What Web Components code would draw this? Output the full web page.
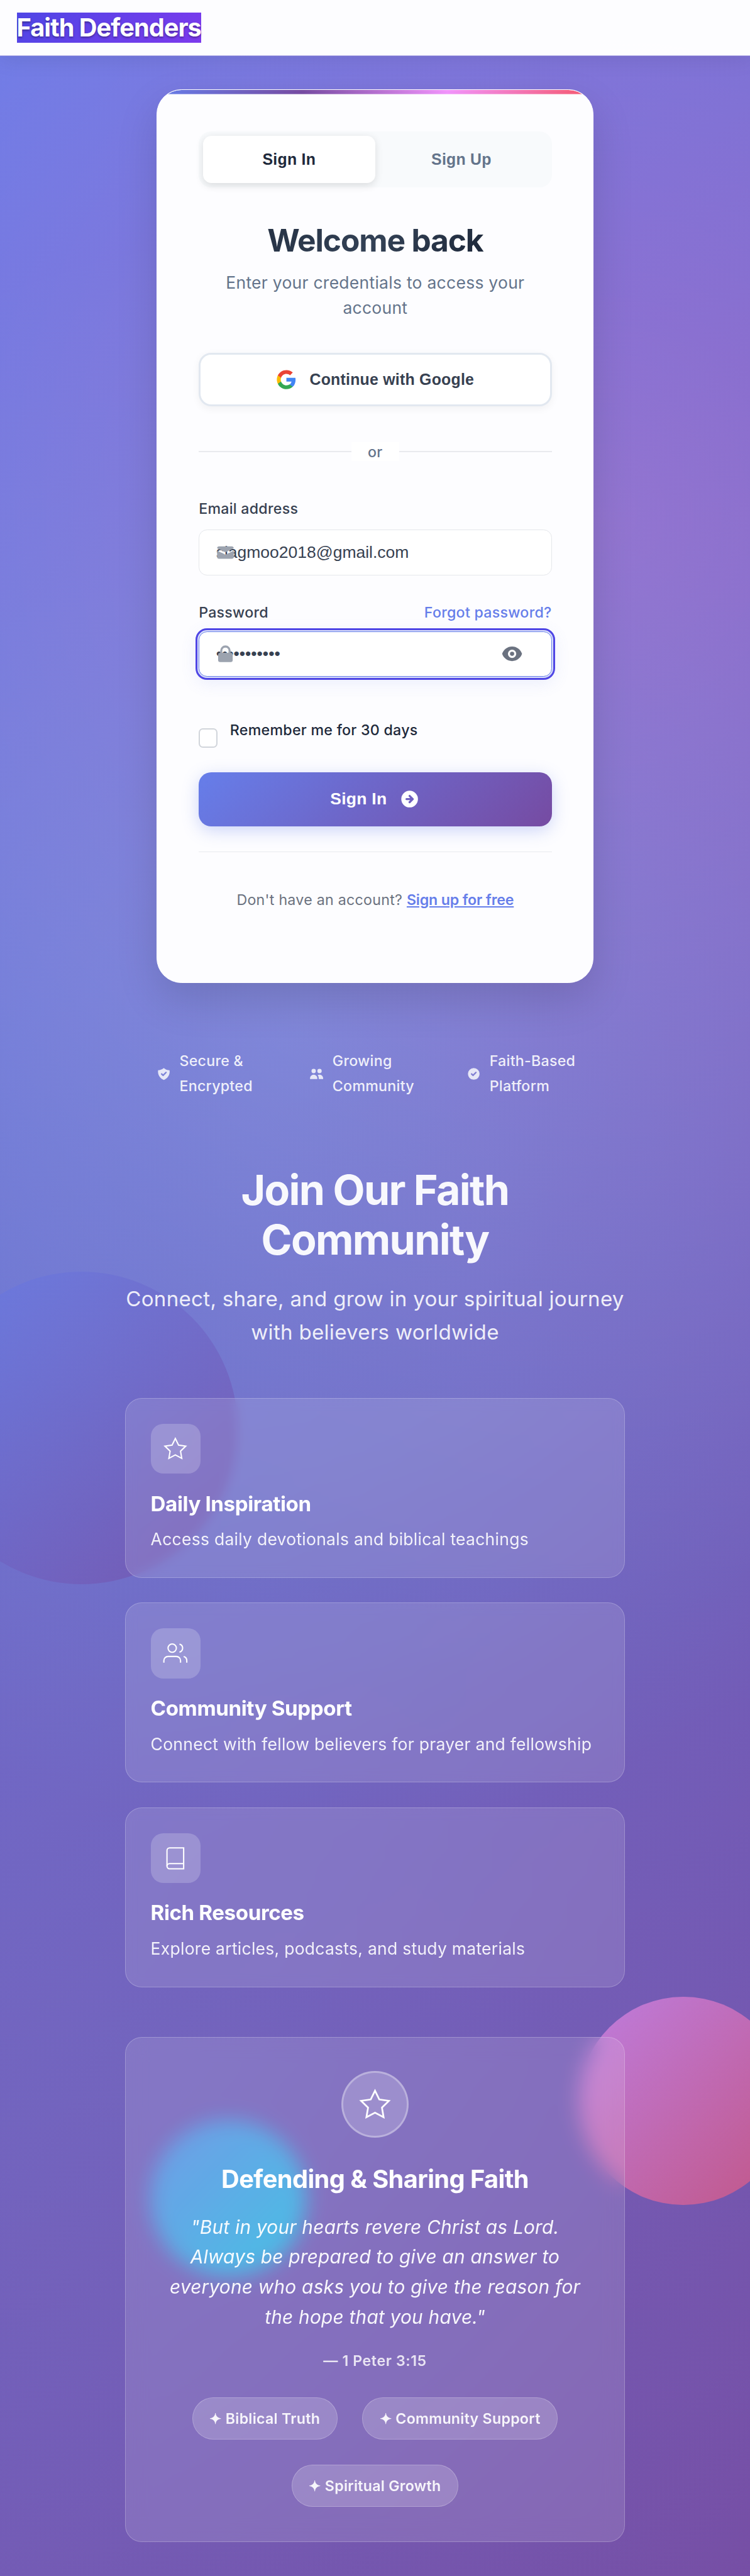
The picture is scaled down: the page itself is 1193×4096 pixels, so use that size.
<!DOCTYPE html>
<html lang="en">
<head>
<meta charset="utf-8">
<title>Faith Defenders</title>
<style>
html{margin:0;background:#764ba2}
body{margin:0;width:720px;height:2472px;zoom:1.65694;overflow:hidden;font-family:Inter,"Liberation Sans",sans-serif;letter-spacing:.16px;color:#1e293b}
</style>
</head>
<body>
<faith-app></faith-app>
<script>
const define=(name,css,html)=>customElements.define(name,class extends HTMLElement{
  constructor(){
    super();
    const t=document.createElement('template');
    t.innerHTML=`<style>*{box-sizing:border-box}${css}</style>${html}`;
    this.attachShadow({mode:'open'}).append(t.content.cloneNode(true));
  }
});

const ICONS={
  mail:['0 0 20 20','<path d="M2.003 5.884L10 9.882l7.997-3.998A2 2 0 0016 4H4a2 2 0 00-1.997 1.884z"/><path d="M18 8.118l-8 4-8-4V14a2 2 0 002 2h12a2 2 0 002-2V8.118z"/>'],
  lock:['0 0 20 20','<path fill-rule="evenodd" d="M5 9V7a5 5 0 0110 0v2a2 2 0 012 2v5a2 2 0 01-2 2H5a2 2 0 01-2-2v-5a2 2 0 012-2zm8-2v2H7V7a3 3 0 016 0z"/>'],
  eye:['0 0 20 20','<path d="M10 12a2 2 0 100-4 2 2 0 000 4z"/><path fill-rule="evenodd" d="M.458 10C1.732 5.943 5.522 3 10 3s8.268 2.943 9.542 7c-1.274 4.057-5.064 7-9.542 7S1.732 14.057.458 10zM14 10a4 4 0 11-8 0 4 4 0 018 0z"/>'],
  arrow:['0 0 20 20','<path fill-rule="evenodd" d="M10 18a8 8 0 100-16 8 8 0 000 16zm3.707-8.707l-3-3a1 1 0 00-1.414 1.414L10.586 9H7a1 1 0 100 2h3.586l-1.293 1.293a1 1 0 101.414 1.414l3-3a1 1 0 000-1.414z"/>'],
  shield:['0 0 20 20','<path fill-rule="evenodd" d="M2.166 4.999A11.954 11.954 0 0010 1.944 11.954 11.954 0 0017.834 5c.11.65.166 1.32.166 2.001 0 5.225-3.34 9.67-8 11.317C5.34 16.67 2 12.225 2 7c0-.682.057-1.35.166-2.001zm11.541 3.708a1 1 0 00-1.414-1.414L9 10.586 7.707 9.293a1 1 0 00-1.414 1.414l2 2a1 1 0 001.414 0l4-4z"/>'],
  people:['0 0 20 20','<path d="M9 6a3 3 0 11-6 0 3 3 0 016 0zM17 6a3 3 0 11-6 0 3 3 0 016 0zM12.93 17c.046-.327.07-.66.07-1a6.97 6.97 0 00-1.5-4.33A5 5 0 0119 16v1h-6.07zM6 11a5 5 0 015 5v1H1v-1a5 5 0 015-5z"/>'],
  check:['0 0 20 20','<path fill-rule="evenodd" d="M10 18a8 8 0 100-16 8 8 0 000 16zm3.707-9.293a1 1 0 00-1.414-1.414L9 10.586 7.707 9.293a1 1 0 00-1.414 1.414l2 2a1 1 0 001.414 0l4-4z"/>'],
  google:['0 0 24 24','<path fill="#4285F4" d="M22.56 12.25c0-.78-.07-1.53-.2-2.25H12v4.26h5.92c-.26 1.37-1.04 2.53-2.21 3.31v2.77h3.57c2.08-1.92 3.28-4.74 3.28-8.09z"/><path fill="#34A853" d="M12 23c2.97 0 5.46-.98 7.28-2.66l-3.57-2.77c-.98.66-2.23 1.06-3.71 1.06-2.86 0-5.29-1.93-6.16-4.53H2.18v2.84C3.99 20.53 7.7 23 12 23z"/><path fill="#FBBC05" d="M5.84 14.09c-.22-.66-.35-1.36-.35-2.09s.13-1.43.35-2.09V7.07H2.18C1.43 8.55 1 10.22 1 12s.43 3.45 1.18 4.93l2.85-2.22.81-.62z"/><path fill="#EA4335" d="M12 5.38c1.62 0 3.06.56 4.21 1.64l3.15-3.15C17.45 2.09 14.97 1 12 1 7.7 1 3.99 3.47 2.18 7.07l3.66 2.84c.87-2.6 3.3-4.53 6.16-4.53z"/>'],
  star:['0 0 24 24','<g fill="none" stroke="currentColor" stroke-width="1.25"><polygon points="12 2 15.09 8.26 22 9.27 17 14.14 18.18 21.02 12 17.77 5.82 21.02 7 14.14 2 9.27 8.91 8.26 12 2"/></g>'],
  users:['0 0 24 24','<g fill="none" stroke="currentColor" stroke-width="1.25"><path d="M17 21v-2a4 4 0 0 0-4-4H5a4 4 0 0 0-4 4v2"/><circle cx="9" cy="7" r="4"/><path d="M23 21v-2a4 4 0 0 0-3-3.87M16 3.13a4 4 0 0 1 0 7.75"/></g>'],
  book:['0 0 24 24','<g fill="none" stroke="currentColor" stroke-width="1.25"><path d="M4 19.5A2.5 2.5 0 0 1 6.5 17H20"/><path d="M6.5 2H20v20H6.5A2.5 2.5 0 0 1 4 19.5v-15A2.5 2.5 0 0 1 6.5 2z"/></g>']
};
customElements.define('ui-icon',class extends HTMLElement{
  constructor(){super();this.attachShadow({mode:'open'})}
  connectedCallback(){
    const [box,body]=ICONS[this.getAttribute('name')];
    this.shadowRoot.innerHTML=`<style>:host{display:block;flex:none;width:20px;height:20px}svg{display:block;width:100%;height:100%;overflow:visible}</style><svg viewBox="${box}" fill="currentColor">${body}</svg>`;
  }
});

define('site-header',`
:host{display:flex;align-items:flex-start;height:53.8px;padding:12px 16px;box-sizing:border-box;background:rgba(255,255,255,.99);border-bottom:1px solid #b3aee8;box-shadow:0 4px 20px rgba(0,0,0,.08);position:relative}
a{font-size:24px;line-height:28.8px;font-weight:700;letter-spacing:-.025em;color:#fff;background:linear-gradient(135deg,#4f46e5,#7c3aed);text-shadow:0 1px 2px rgba(0,0,0,.35)}`,
`<a><slot></slot></a>`);

define('auth-tabs',`
:host{display:flex;height:53.5px;padding:4px;border-radius:12px;background:#f8fafc}
div{flex:1;display:flex;align-items:center;justify-content:center;border-radius:8px;font:700 15px "Liberation Sans",Arial,sans-serif;letter-spacing:.15px;color:#64748b}
.on{background:#fff;color:#1e293b;box-shadow:0 2px 8px rgba(0,0,0,.12)}`,
`<div class="on">Sign In</div><div>Sign Up</div>`);

define('google-button',`
:host{display:flex;align-items:center;justify-content:center;gap:12px;height:51.2px;margin-top:31.2px;box-sizing:border-box;border:1.85px solid #e2e8f0;border-radius:12px;background:#fff;color:#374151;font:700 15px "Liberation Sans",Arial,sans-serif;letter-spacing:.15px;box-shadow:0 2px 8px rgba(0,0,0,.05)}`,
`<ui-icon name="google"></ui-icon><span><slot></slot></span>`);

define('or-divider',`
:host{display:flex;align-items:center;height:22.4px;margin-top:32.3px;font-size:14px;font-weight:500;color:#64748b}
i{flex:1;height:1px;background:#e9eaee}
span{padding:1px 16px 0;background:#fff;line-height:17px}`,
`<i></i><span><slot></slot></span><i></i>`);

define('form-field',`
:host{display:block}
.row{display:flex;justify-content:space-between;padding-top:1px;font-size:14px;line-height:22.4px;font-weight:500;color:#374151}
.row ::slotted(a){color:#667eea}
.box{display:flex;align-items:center;height:44px;margin-top:var(--gap,8.2px);padding:0 27.5px 0 16px;border:1px solid #e5e7eb;border-radius:8px;background:#fff;position:relative;font:16px "Liberation Sans",Arial,sans-serif;letter-spacing:0;color:#374151}
:host([focused]) .box{border-color:#667eea;outline:1.85px solid #4f46e5;outline-offset:1.25px;box-shadow:0 0 0 2px rgba(102,126,234,.18),0 4px 16px 2px rgba(102,126,234,.12)}
.lead{position:absolute;left:15.2px;top:11.3px;color:#9ca3af}
.value{flex:1}
.tail{color:#6b7280}`,
`<div class="row"><slot name="label"></slot><slot name="aside"></slot></div>
<div class="box"><span class="value"><slot></slot></span><span class="lead"><slot name="icon"></slot></span><span class="tail"><slot name="tail"></slot></span></div>`);

define('check-row',`
:host{display:flex;align-items:flex-start;gap:12px;margin-top:39px;height:52.3px;font-size:14px;line-height:22.4px;font-weight:500}
i{width:18px;height:18.5px;margin-top:10.4px;border:1.5px solid #d1d5db;border-radius:4px;background:#fff}
span{padding-top:1px}`,
`<i></i><span><slot></slot></span>`);

define('submit-button',`
:host{display:flex;align-items:center;justify-content:center;gap:12px;height:52px;border-radius:12px;background:linear-gradient(135deg,#667eea,#764ba2);color:#fff;font:700 16px "Liberation Sans",Arial,sans-serif;letter-spacing:.16px;box-shadow:0 4px 16px rgba(102,126,234,.32)}`,
`<span><slot></slot></span><ui-icon name="arrow"></ui-icon>`);

define('auth-card',`
:host{display:block;box-sizing:border-box;width:419.6px;height:857.3px;margin:32px 0 0 150.4px;padding:40px 39.8px;border:1px solid #fff;border-radius:24px;background:linear-gradient(90deg,#667eea,#764ba2 33.3%,#f093fb 66.6%,#f5576c) top/100% 4px no-repeat padding-box,rgba(255,255,255,.985);box-shadow:0 16px 40px rgba(0,0,0,.13)}
h2{margin:33px 0 0;font-size:30px;line-height:36px;font-weight:700;letter-spacing:-.0235em;text-align:center;color:transparent;background:linear-gradient(135deg,#1e293b 0%,#334155 50%,#1e293b 80%);-webkit-background-clip:text;background-clip:text}
.sub{margin:10.6px 0 0;font-size:16px;line-height:24px;text-align:center;color:#64748b}
form-field{margin-top:32.1px}
form-field+form-field{margin-top:23.8px;--gap:6.2px}
a{color:#667eea}
.foot{margin-top:24px;border-top:1px solid #e9eaee;padding-top:35.2px;text-align:center;font-size:14px;line-height:22.4px;color:#6b7280}
.foot a{font-weight:600;letter-spacing:-.1px;text-decoration:underline}`,
`<auth-tabs></auth-tabs>
<h2>Welcome back</h2>
<p class="sub">Enter your credentials to access your account</p>
<google-button>Continue with Google</google-button>
<or-divider>or</or-divider>
<form-field><span slot="label">Email address</span><ui-icon slot="icon" name="mail"></ui-icon>slagmoo2018@gmail.com</form-field>
<form-field focused><span slot="label">Password</span><a slot="aside">Forgot password?</a><ui-icon slot="icon" name="lock"></ui-icon>•••••••••••<ui-icon slot="tail" name="eye"></ui-icon></form-field>
<check-row>Remember me for 30 days</check-row>
<submit-button>Sign In</submit-button>
<div class="foot">Don't have an account? <a>Sign up for free</a></div>`);

define('trust-item',`
:host{display:flex;align-items:center;gap:8px;font-size:14px;line-height:23.8px;font-weight:500;color:rgba(255,255,255,.9)}`,
`<slot name="icon"></slot><span><slot></slot></span>`);

define('trust-row',`
:host{display:grid;grid-template-columns:146.9px 150.8px auto;width:420px;margin:63.8px auto 0;padding-left:.3px;box-sizing:border-box}
ui-icon{width:14px;height:14px;opacity:.9}`,
`<trust-item><ui-icon slot="icon" name="shield"></ui-icon>Secure &amp;<br>Encrypted</trust-item>
<trust-item><ui-icon slot="icon" name="people"></ui-icon>Growing<br>Community</trust-item>
<trust-item><ui-icon slot="icon" name="check"></ui-icon>Faith-Based<br>Platform</trust-item>`);

define('feature-card',`
:host{display:block;box-sizing:border-box;height:172.4px;padding:24px;border:1px solid rgba(255,255,255,.22);border-radius:16px;background:rgba(255,255,255,.12);backdrop-filter:blur(5px);color:#fff}
.ico{display:flex;align-items:center;justify-content:center;width:48px;height:48px;border-radius:12px;background:rgba(255,255,255,.2)}
::slotted(ui-icon){width:24px;height:24px}
h3{margin:17px 0 0;font-size:20px;line-height:24px;font-weight:700;letter-spacing:-.012em}
p{margin:9px 0 0;font-size:16px;line-height:25.6px;color:rgba(255,255,255,.9)}`,
`<div class="ico"><slot name="icon"></slot></div><h3><slot name="title"></slot></h3><p><slot></slot></p>`);

define('value-pill',`
:host{display:flex;align-items:center;height:40.4px;box-sizing:border-box;padding:1.2px 16px 0;border:1px solid rgba(255,255,255,.22);border-radius:20px;background:rgba(255,255,255,.18);font-size:14px;font-weight:600;color:rgba(255,255,255,.92)}`,
`<span>✦ <slot></slot></span>`);

define('verse-card',`
:host{display:flex;flex-direction:column;align-items:center;box-sizing:border-box;height:484.8px;margin-top:48px;padding:32px;border:1px solid rgba(255,255,255,.22);border-radius:16px;background:rgba(255,255,255,.12);backdrop-filter:blur(10px);color:#fff;text-align:center}
.ico{display:flex;align-items:center;justify-content:center;width:64px;height:64px;border:1.85px solid rgba(255,255,255,.3);border-radius:50%;background:rgba(255,255,255,.2)}
.ico ui-icon{width:32px;height:32px}
h3{margin:25px 0 0;font-size:24px;line-height:28.8px;font-weight:700;letter-spacing:-.0145em}
blockquote{margin:17.7px 0 0;font-size:18px;line-height:28.8px;font-style:italic;letter-spacing:.14px;color:rgba(255,255,255,.95)}
cite{margin-top:16.7px;font-size:14px;line-height:22.4px;font-weight:600;font-style:normal;letter-spacing:.025em;color:rgba(255,255,255,.82)}
.pills{display:flex;flex-wrap:wrap;justify-content:center;gap:24px;margin-top:23.4px}`,
`<div class="ico"><ui-icon name="star"></ui-icon></div>
<h3>Defending &amp; Sharing Faith</h3>
<blockquote>"But in your hearts revere Christ as Lord. Always be prepared to give an answer to everyone who asks you to give the reason for the hope that you have."</blockquote>
<cite>— 1 Peter 3:15</cite>
<div class="pills"><value-pill>Biblical Truth</value-pill><value-pill>Community Support</value-pill><value-pill>Spiritual Growth</value-pill></div>`);

define('community-section',`
:host{display:block;width:480px;margin:63.6px auto 0}
h1{margin:0 auto;width:380px;font-size:40px;line-height:48px;font-weight:700;letter-spacing:-.025em;text-align:center;color:rgba(255,255,255,.95)}
.sub{margin:16.4px 0 47.2px;font-size:20px;line-height:32px;text-align:center;color:rgba(255,255,255,.9)}
.list{display:flex;flex-direction:column;gap:24px}`,
`<h1>Join Our Faith Community</h1>
<p class="sub">Connect, share, and grow in your spiritual journey with believers worldwide</p>
<div class="list">
<feature-card><ui-icon slot="icon" name="star"></ui-icon><span slot="title">Daily Inspiration</span>Access daily devotionals and biblical teachings</feature-card>
<feature-card><ui-icon slot="icon" name="users"></ui-icon><span slot="title">Community Support</span>Connect with fellow believers for prayer and fellowship</feature-card>
<feature-card><ui-icon slot="icon" name="book"></ui-icon><span slot="title">Rich Resources</span>Explore articles, podcasts, and study materials</feature-card>
</div>
<verse-card></verse-card>`);

define('glow-orb',`
:host{position:absolute;border-radius:50%;opacity:.6;z-index:-1}`,``);

define('faith-app',`
:host{display:block;position:relative;z-index:0;height:2472px;overflow:hidden;
background:radial-gradient(circle at 20% 80%,rgba(120,119,198,.3) 0%,transparent 50%),radial-gradient(circle at 80% 20%,rgba(255,119,198,.26) 0%,transparent 50%),radial-gradient(circle at 40% 40%,rgba(120,219,255,.27) 0%,transparent 50%),linear-gradient(135deg,#667eea 0%,#764ba2 100%)}
.a{width:300px;height:300px;left:-72px;top:1220.5px;background:linear-gradient(135deg,#667eea,#764ba2)}
.b{width:200px;height:200px;left:556px;top:1916px;background:linear-gradient(135deg,#f093fb,#f5576c)}
.c{width:150px;height:150px;left:144px;top:2034.6px;background:linear-gradient(135deg,#4facfe,#00f2fe)}`,
`<glow-orb class="a"></glow-orb><glow-orb class="b"></glow-orb><glow-orb class="c"></glow-orb>
<site-header>Faith Defenders</site-header>
<auth-card></auth-card>
<trust-row></trust-row>
<community-section></community-section>`);
</script>
</body>
</html>
